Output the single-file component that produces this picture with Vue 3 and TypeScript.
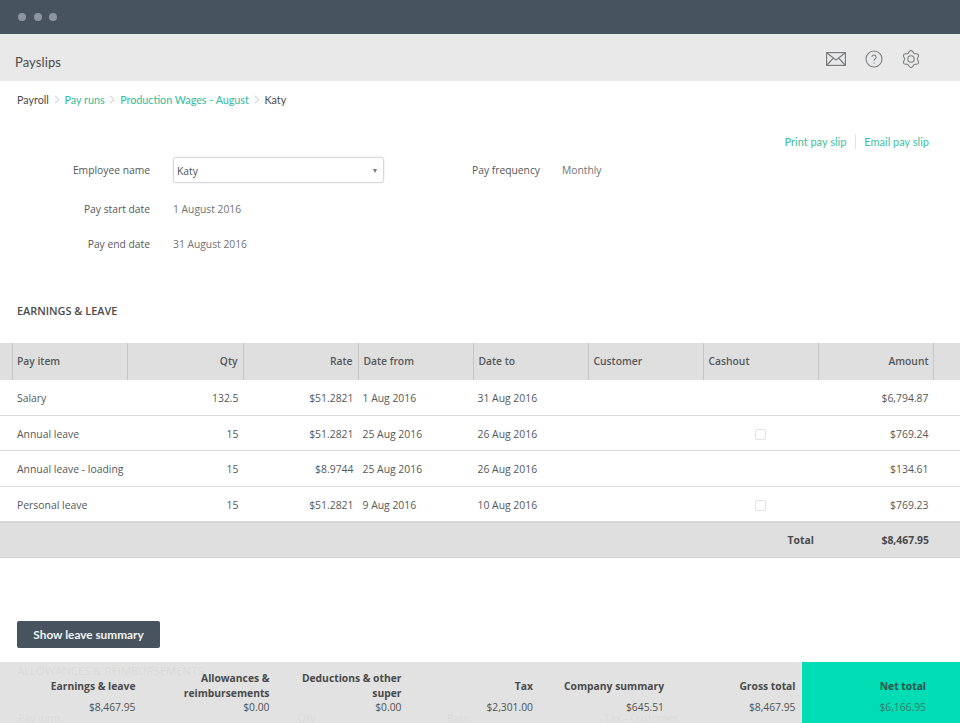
<script setup lang="ts">
interface Row { item: string; qty: string; rate: string; from: string; to: string; cashout: boolean; amount: string }
const rows: Row[] = [
  { item: 'Salary', qty: '132.5', rate: '$51.2821', from: '1 Aug 2016', to: '31 Aug 2016', cashout: false, amount: '$6,794.87' },
  { item: 'Annual leave', qty: '15', rate: '$51.2821', from: '25 Aug 2016', to: '26 Aug 2016', cashout: true, amount: '$769.24' },
  { item: 'Annual leave - loading', qty: '15', rate: '$8.9744', from: '25 Aug 2016', to: '26 Aug 2016', cashout: false, amount: '$134.61' },
  { item: 'Personal leave', qty: '15', rate: '$51.2821', from: '9 Aug 2016', to: '10 Aug 2016', cashout: true, amount: '$769.23' },
]
const summary = [
  { label: 'Earnings & leave', value: '$8,467.95' },
  { label: 'Allowances & reimbursements', value: '$0.00' },
  { label: 'Deductions & other super', value: '$0.00' },
  { label: 'Tax', value: '$2,301.00' },
  { label: 'Company summary', value: '$645.51' },
  { label: 'Gross total', value: '$8,467.95' },
]
// Rounded gear outline: radius oscillates around the hub, six soft teeth.
const gearPath = Array.from({ length: 121 }, (_, i) => {
  const t = (i / 120) * Math.PI * 2
  const r = 7.4 + 1.05 * Math.cos(6 * t)
  const x = 9 + r * Math.sin(t)
  const y = 9 - r * Math.cos(t)
  return `${i === 0 ? 'M' : 'L'}${x.toFixed(2)} ${y.toFixed(2)}`
}).join('') + 'Z'
</script>

<template>
  <div class="page">
    <div class="chrome">
      <span class="dot"></span><span class="dot"></span><span class="dot"></span>
    </div>
    <header class="appbar">
      <h1>Payslips</h1>
      <div class="icons">
        <svg width="20" height="14" viewBox="0 0 20 14" fill="none" stroke="#7c7f82" stroke-width="1.2">
          <rect x="0.6" y="0.6" width="18.8" height="12.8" />
          <path d="M1 1l9 7 9-7M1 13l6.5-7M19 13l-6.5-7" />
        </svg>
        <svg width="18" height="18" viewBox="0 0 18 18" fill="none" stroke="#7c7f82" stroke-width="1.1">
          <circle cx="9" cy="9" r="8" />
          <path d="M6.9 7a2.1 2.1 0 1 1 3.3 1.8c-.8.5-1.2 1-1.2 1.9" />
          <path d="M9 12.4v1.1" />
        </svg>
        <svg width="18" height="18" viewBox="0 0 18 18" fill="none" stroke="#7c7f82" stroke-width="1.1">
          <circle cx="9" cy="9" r="3.2" />
          <path :d="gearPath" />
        </svg>
      </div>
    </header>

    <nav class="crumbs">
      <span class="crumb-dark">Payroll</span>
      <svg class="sep" width="6" height="9" viewBox="0 0 6 9" fill="none" stroke="#c4c4c4" stroke-width="1"><path d="M1 .8L5 4.5 1 8.2" /></svg>
      <a>Pay runs</a>
      <svg class="sep" width="6" height="9" viewBox="0 0 6 9" fill="none" stroke="#c4c4c4" stroke-width="1"><path d="M1 .8L5 4.5 1 8.2" /></svg>
      <a>Production Wages - August</a>
      <svg class="sep" width="6" height="9" viewBox="0 0 6 9" fill="none" stroke="#c4c4c4" stroke-width="1"><path d="M1 .8L5 4.5 1 8.2" /></svg>
      <span class="crumb-dark">Katy</span>
    </nav>

    <div class="actions">
      <a>Print pay slip</a>
      <span class="divider"></span>
      <a>Email pay slip</a>
    </div>

    <section class="form">
      <div class="form-col">
        <div class="field first">
          <label>Employee name</label>
          <div class="select"><span>Katy</span><i class="caret"></i></div>
        </div>
        <div class="field second">
          <label>Pay start date</label>
          <span class="value">1 August 2016</span>
        </div>
        <div class="field">
          <label>Pay end date</label>
          <span class="value">31 August 2016</span>
        </div>
      </div>
      <div class="freq">
        <label>Pay frequency</label>
        <span class="value">Monthly</span>
      </div>
    </section>

    <h2 class="section-title">EARNINGS &amp; LEAVE</h2>

    <div class="table">
      <div class="tr head">
        <div class="c0"></div>
        <div class="c first-c">Pay item</div>
        <div class="c r">Qty</div>
        <div class="c r">Rate</div>
        <div class="c">Date from</div>
        <div class="c">Date to</div>
        <div class="c">Customer</div>
        <div class="c">Cashout</div>
        <div class="c r last-c">Amount</div>
        <div class="cend"></div>
      </div>
      <div v-for="row in rows" :key="row.item" class="tr body">
        <div class="c0"></div>
        <div class="c">{{ row.item }}</div>
        <div class="c r">{{ row.qty }}</div>
        <div class="c r">{{ row.rate }}</div>
        <div class="c">{{ row.from }}</div>
        <div class="c">{{ row.to }}</div>
        <div class="c"></div>
        <div class="c ctr"><span v-if="row.cashout" class="check"></span></div>
        <div class="c r">{{ row.amount }}</div>
        <div class="cend"></div>
      </div>
      <div class="total">
        <span class="total-label">Total</span>
        <span class="total-value">$8,467.95</span>
      </div>
    </div>

    <button class="btn" type="button">Show leave summary</button>

    <h2 class="ghost-title">ALLOWANCES &amp; REIMBURSEMENTS</h2>
    <div class="ghost-head">
      <span class="g1">Pay item</span><span class="g2">Qty</span><span class="g3">Rate</span><span class="g4">Tax - Customer</span>
    </div>

    <footer class="summary">
      <div v-for="s in summary" :key="s.label" class="sum">
        <div class="sum-label">{{ s.label }}</div>
        <div class="sum-value">{{ s.value }}</div>
      </div>
      <div class="net">
        <div class="sum-label">Net total</div>
        <div class="sum-value">$6,166.95</div>
      </div>
    </footer>
  </div>
</template>

<style scoped>
.page {
  position: relative;
  width: 960px;
  height: 723px;
  overflow: hidden;
  background: #fff;
  font-family: "Open Sans", "Liberation Sans", sans-serif;
  font-size: 10.3px;
  color: #55585a;
}
.chrome {
  height: 34px;
  background: #47545f;
  display: flex;
  align-items: center;
  gap: 7.5px;
  padding-left: 18px;
  box-sizing: border-box;
  padding-bottom: 1px;
}
.dot { width: 8px; height: 8px; border-radius: 50%; background: #8d969e; }
.appbar {
  height: 47px;
  background: #e9e9e9;
  display: flex;
  align-items: center;
  justify-content: space-between;
  box-sizing: border-box;
  padding: 0 40px 0 15px;
}
h1 { margin: 0; font-size: 13px; font-weight: 400; color: #4a4a4a; padding-top: 9px; font-family: Lato, "Open Sans", sans-serif; letter-spacing: .1px; }
.icons { display: flex; align-items: center; gap: 19px; padding-top: 3px; }
.crumbs {
  height: 37px;
  display: flex;
  align-items: center;
  padding-left: 17px;
  font-family: Lato, "Open Sans", sans-serif;
  font-size: 10.75px;
  color: #2fbb9d;
}
.crumb-dark { color: #4a4a4a; }
.sep { margin: 0 4.8px; }
.actions {
  display: flex;
  justify-content: flex-end;
  align-items: center;
  height: 16px;
  margin-top: 15px;
  padding-right: 31px;
  font-family: Lato, "Open Sans", sans-serif;
  font-size: 11px;
  color: #3dbf9f;
}
.divider { width: 1px; height: 15px; background: #e3e3e3; margin: 0 8.5px; }
.form { display: flex; margin-top: 3px; height: 105px; }
.form-col { width: 472px; }
.field { display: flex; align-items: center; height: 35.5px; }
.field.first { height: 36px; }
.field.second { margin-top: 3px; }
.field label { width: 150px; text-align: right; margin-right: 23px; }
.value { color: #6f7275; }
.select {
  width: 211px;
  height: 26px;
  box-sizing: border-box;
  border: 1px solid #d9d9d9;
  border-radius: 2px;
  box-shadow: 0 0 2px #e0e0e0;
  display: flex;
  align-items: center;
  justify-content: space-between;
  padding: 1px 6px 0 3px;
  color: #4f5254;
}
.caret { width: 0; height: 0; border-left: 2.5px solid transparent; border-right: 2.5px solid transparent; border-top: 4.5px solid #777; }
.freq { display: flex; gap: 22px; height: 36px; align-items: center; }
.section-title { margin: 0; padding: 46px 0 0 17px; height: 18px; font-size: 10.9px; font-weight: 600; color: #4c4c4c; }
.table { margin-top: 22px; font-size: 10.4px; }
.tr { display: grid; grid-template-columns: 13px 115px 115.5px 115px 115px 115px 115px 115px 115px 26.5px; }
.head { height: 37px; background: #dfdfdf; font-weight: 600; color: #55585a; font-size: 10.3px; }
.head > div { border-right: 1px solid #c6c6c6; box-sizing: border-box; }
.head > .cend { border-right: 0; }
.head .c, .body .c { display: flex; align-items: center; box-sizing: border-box; white-space: nowrap; }
.head .c { padding: 0 5px 2px 5px; }
.head .first-c { padding-left: 4px; }
.head .last-c { padding-right: 4px; }
.body .c { padding: 2px 5px 0 4px; }
.r { justify-content: flex-end; }
.body .ctr { justify-content: center; padding: 4px 0 0; }
.body { height: 35.5px; box-sizing: border-box; border-bottom: 1px solid #dcdcdc; color: #55585a; }
.body:last-of-type { border-bottom: 0; }
.check { width: 9px; height: 9px; border: 1px solid #e2e2e2; border-radius: 2px; margin-right: 1px; }
.total {
  height: 36px;
  box-sizing: border-box;
  background: #dfdfdf;
  border-top: 1px solid #d0d0d0;
  border-bottom: 1px solid #d0d0d0;
  display: flex;
  align-items: center;
  justify-content: flex-end;
  padding: 0 31px 0 0;
  font-weight: 700;
  color: #4a4a4a;
}
.total-value { margin-left: 27px; width: 88px; text-align: right; }
.btn {
  display: block;
  margin: 63px 0 0 17px;
  width: 143px;
  height: 27px;
  border: 0;
  border-radius: 2px;
  background: #47545f;
  color: #f2f4f5;
  font-family: Lato, "Open Sans", sans-serif;
  font-size: 11.8px;
  font-weight: 700;
  padding: 0;
}
.ghost-title { margin: 15px 0 0 17px; font-weight: 400; font-size: 11.3px; line-height: 16px; color: #b0b0b0; height: 16px; white-space: nowrap; }
.ghost-head { position: relative; margin-top: 32px; height: 16px; font-size: 10.5px; color: #b0b0b0; }
.ghost-head span { position: absolute; top: 0; white-space: nowrap; }
.g1 { left: 18px; } .g2 { left: 298px; } .g3 { left: 447px; } .g4 { left: 604px; }
.summary {
  position: absolute;
  left: 0;
  right: 0;
  bottom: 0;
  height: 61px;
  background: rgba(222, 222, 222, .88);
  display: grid;
  grid-template-columns: 135.5px 134px 132px 131.5px 131px 131.5px 1fr;
  color: #4f5254;
}
.sum { display: flex; flex-direction: column; justify-content: flex-end; text-align: right; padding-bottom: 9px; height: 61px; box-sizing: border-box; align-items: flex-end; }
.sum-label { font-weight: 700; color: #4a4a4a; line-height: 14.5px; margin-bottom: 6.5px; max-width: 118px; }
.sum:nth-child(2) .sum-label, .sum:nth-child(3) .sum-label { margin-bottom: 0; }
.sum-value { line-height: 14px; }
.net {
  margin-left: 6.5px;
  background: #00dcb4;
  display: flex;
  flex-direction: column;
  justify-content: flex-end;
  align-items: flex-end;
  padding: 0 34px 9px 0;
}
.net .sum-label { color: #2b544b; }
.net .sum-value { color: #3b7d6d; }
</style>
